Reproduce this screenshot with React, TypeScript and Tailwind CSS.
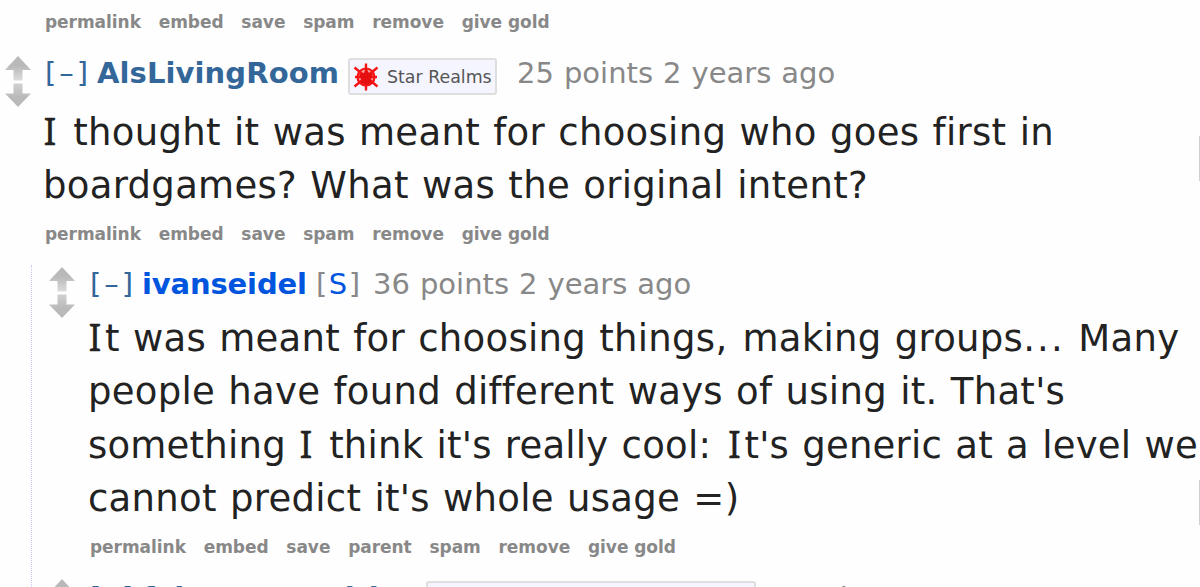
import React from "react";

const LINKS = ["permalink", "embed", "save", "spam", "remove", "give gold"];
const REPLY_LINKS = ["permalink", "embed", "save", "parent", "spam", "remove", "give gold"];

function VoteArrows() {
  return (
    <svg width="26" height="52" viewBox="0 0 26 52" className="block shrink-0">
      <defs>
        <linearGradient id="up" x1="0" y1="0" x2="0" y2="1">
          <stop offset="0.4" stopColor="#b9b9b9" />
          <stop offset="1" stopColor="#dcdcdc" />
        </linearGradient>
        <linearGradient id="down" x1="0" y1="0" x2="0" y2="1">
          <stop offset="0" stopColor="#d0d0d0" />
          <stop offset="0.6" stopColor="#b9b9b9" />
        </linearGradient>
      </defs>
      <path d="M13 0 26 14H17.5V24.5H8.5V14H0Z" fill="url(#up)" />
      <path d="M8.5 27.5H17.5V37.5H26L13 51 0 37.5H8.5Z" fill="url(#down)" />
    </svg>
  );
}

function LinkBar({ links }: { links: string[] }) {
  return (
    <div className="flex h-[22px] gap-[17.8px] whitespace-nowrap text-[17px] leading-[22px] font-bold tracking-[-0.05px] text-[#888888]">
      {links.map((link) => (
        <a key={link}>{link}</a>
      ))}
    </div>
  );
}

// serifed capital I
function I() {
  return (
    <span className="ml-[0.5px] font-['Noto_Sans',sans-serif] text-[38px] leading-none tracking-[3.5px] [-webkit-text-stroke:0.3px_#222222]">
      I
    </span>
  );
}

function Collapse() {
  return (
    <span className="w-[52px] text-[#336699]">
      [<span className="mx-[3px]">–</span>]
    </span>
  );
}

function FlairIcon() {
  return (
    <svg width="26" height="28" viewBox="0 0 26 28" className="block shrink-0" fill="none" stroke="#f51414">
      <circle cx="13" cy="14" r="8.5" strokeWidth="2.2" fill="#f9a0a0" />
      <path d="M13 0.5V27.5M2 14H24M1.5 4.5 24.5 23.5M24.5 4.5 1.5 23.5" strokeWidth="2.4" />
      <path d="M13 5 16 10 20 11 18 16 19 20 13 22 8 20 8 16 6 11 11 10Z" fill="#e60f0f" stroke="none" />
    </svg>
  );
}

export default function App() {
  return (
    <div className="flex h-[587px] w-[1200px] overflow-hidden bg-[#fefefe] font-['DejaVu_Sans',Verdana,sans-serif]">
      <main className="w-[1199px] shrink-0">
        <div className="pt-[11px] pl-[45px]">
          <LinkBar links={LINKS} />
        </div>

        <article className="mt-[22px] flex pl-[5px]">
          <div className="w-[40px] shrink-0 pt-px">
            <VoteArrows />
          </div>
          <div>
            <header className="flex h-[40px] items-start whitespace-nowrap text-[29px] leading-[36px] text-[#888888]">
              <Collapse />
              <span className="w-[251px] font-bold tracking-[0.1px] text-[#336699]">AlsLivingRoom</span>
              <span className="mt-[3px] flex h-[37px] w-[149px] items-center gap-[8px] rounded-[3px] border-2 border-[#dedede] bg-[#f5f5ff] pl-[3px] text-[17.4px] text-[#555555]">
                <FlairIcon />
                <span>Star Realms</span>
              </span>
              <span className="ml-[20px] [word-spacing:0.8px]">25 points 2 years ago</span>
            </header>
            <div className="mt-[11px] -ml-[2px] whitespace-nowrap text-[37px] leading-[53px] tracking-[0.3px] text-[#222222] [word-spacing:1.2px]">
              <p><I /> thought it was meant for choosing who goes first in</p>
              <p>boardgames? What was the original intent?</p>
            </div>
            <div className="mt-[11px]">
              <LinkBar links={LINKS} />
            </div>
          </div>
        </article>

        <section className="mt-[20px] ml-[31px] border-l border-dotted border-[#c9c9f2] pl-[17px]">
          <article className="flex pt-[2px]">
            <div className="w-[41px] shrink-0">
              <VoteArrows />
            </div>
            <div>
              <header className="-mt-px flex h-[40px] items-start whitespace-nowrap text-[29px] leading-[36px] text-[#888888]">
                <Collapse />
                <span className="w-[174px] font-bold tracking-[-0.15px] text-[#0055df]">ivanseidel</span>
                <span className="w-[57px]">[<span className="mx-[1.5px] text-[#0055df]">S</span>]</span>
                <span className="[word-spacing:0.8px]">36 points 2 years ago</span>
              </header>
              <div className="mt-[6px] -ml-[2px] whitespace-nowrap text-[37px] leading-[53.3px] tracking-[0.28px] text-[#222222] [word-spacing:1.2px]">
                <p><I />t was meant for choosing things<span className="tracking-[2px]">,</span> making groups<span className="tracking-[2.2px]">...</span> Many</p>
                <p>people have found different ways of using it. That's</p>
                <p className="tracking-[0.22px]">something <I /> think it's really cool<span className="tracking-[3.5px]">:</span> <I />t's generic at a level we</p>
                <p>cannot predict it's whole usage =)</p>
              </div>
              <div className="mt-[10.8px]">
                <LinkBar links={REPLY_LINKS} />
              </div>
            </div>
          </article>

          <article className="mt-[21px] flex">
            <div className="w-[41px] shrink-0">
              <VoteArrows />
            </div>
            <header className="flex h-[40px] items-start whitespace-nowrap text-[29px] leading-[38px] text-[#888888]">
              <Collapse />
              <span className="w-[284px] font-bold text-[#336699]">faintgerm_with</span>
              <span className="mt-[2px] h-[37px] w-[330px] rounded-[3px] border-2 border-[#dedede] bg-[#f5f5ff]" />
              <span className="ml-[20px]">5 points 2 years ago</span>
            </header>
          </article>
        </section>
      </main>

      {/* scrollbar edges */}
      <aside className="w-px shrink-0">
        <div className="mt-[136px] h-[45px] bg-[#d0d0d0]" />
        <div className="mt-[299px] h-[45px] bg-[#d0d0d0]" />
      </aside>
    </div>
  );
}
